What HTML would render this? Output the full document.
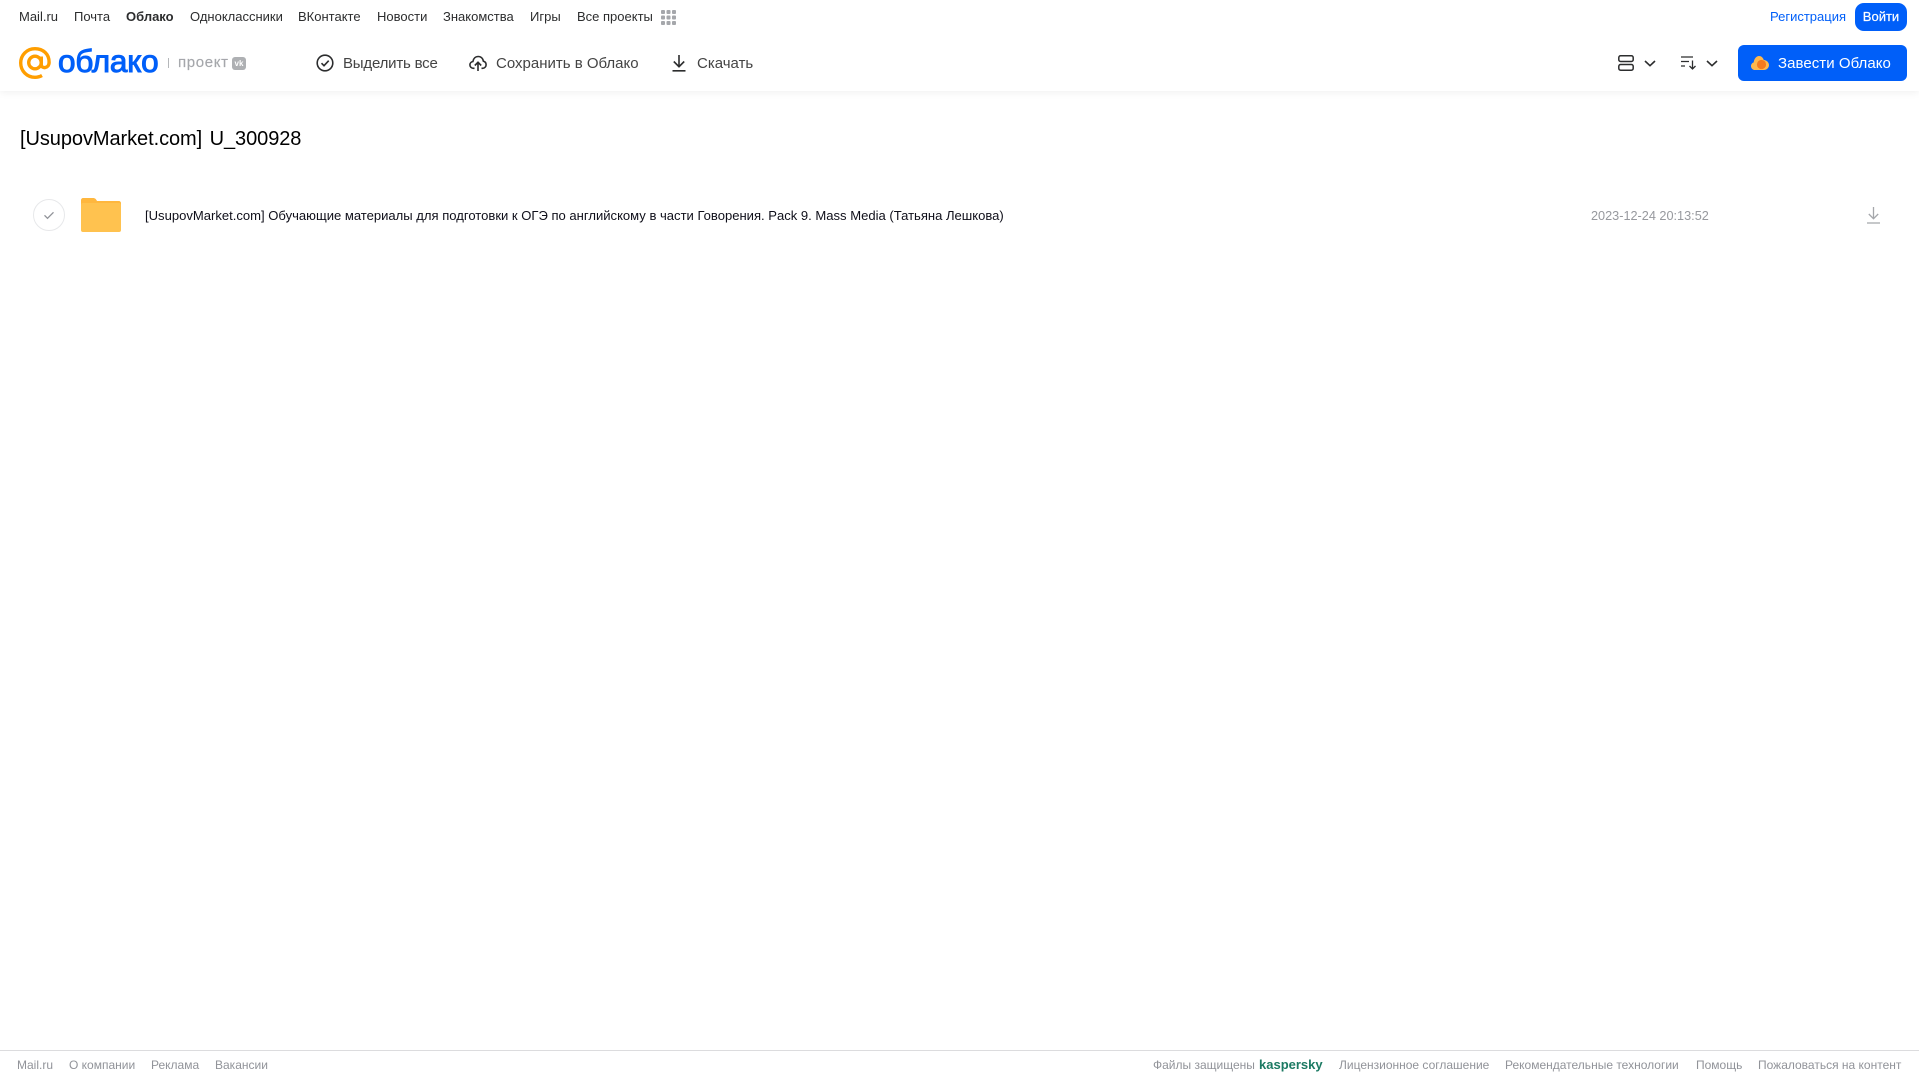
<!DOCTYPE html>
<html lang="ru"><head><meta charset="utf-8"><title>Облако</title>
<style>
html,body{margin:0;padding:0;width:1919px;height:1079px;overflow:hidden;background:#fff;font-family:"Liberation Sans","Noto Sans CJK SC",sans-serif}
.t{position:absolute;white-space:nowrap;line-height:16px}
.n{font-size:13px;top:9px;color:#2c2d2e}
.b{font-size:15px;top:55px;color:#444;line-height:17px}
.f{font-size:12px;top:1057px;color:#919399}
svg{position:absolute;overflow:visible}
#hd{position:absolute;left:0;top:0;width:1919px;height:91px;background:#fff;box-shadow:0 1px 8px rgba(0,0,0,.07)}
</style></head><body>
<div id="hd"></div>
<span class="t n" style="left:19px">Mail.ru</span>
<span class="t n" style="left:74px">Почта</span>
<span class="t n" style="left:126px;font-weight:700">Облако</span>
<span class="t n" style="left:190px">Одноклассники</span>
<span class="t n" style="left:298px">ВКонтакте</span>
<span class="t n" style="left:377px">Новости</span>
<span class="t n" style="left:443px">Знакомства</span>
<span class="t n" style="left:530px">Игры</span>
<span class="t n" style="left:577px">Все проекты</span>
<svg style="left:661px;top:10px" width="15" height="15" fill="#a5a7ab"><rect x="0" y="0" width="4" height="4" rx="1"/><rect x="5.500" y="0" width="4" height="4" rx="1"/><rect x="11" y="0" width="4" height="4" rx="1"/><rect x="0" y="5.500" width="4" height="4" rx="1"/><rect x="5.500" y="5.500" width="4" height="4" rx="1"/><rect x="11" y="5.500" width="4" height="4" rx="1"/><rect x="0" y="11" width="4" height="4" rx="1"/><rect x="5.500" y="11" width="4" height="4" rx="1"/><rect x="11" y="11" width="4" height="4" rx="1"/></svg>
<span class="t n" style="left:1770px;color:#005ff9">Регистрация</span>
<div class="t" style="left:1855px;top:3px;width:52px;height:28px;line-height:27px;background:#005ff9;border-radius:9px;color:#fff;font-size:13px;font-weight:400;text-align:center;-webkit-text-stroke:.2px #fff">Войти</div>

<svg style="left:19px;top:47px" width="32" height="32" viewBox="0 0 32 32" fill="none" stroke="#ff9e00" stroke-width="3.400"><circle cx="16" cy="15.500" r="6.300"/><path d="M22.300 9.500v8.200c0 4.200 7.500 4.200 7.800-2.200C30.300 7 24 1.700 16 1.700 8 1.700 1.700 8 1.700 16S8 30.300 16 30.300c2.800 0 4.900-.6 7-1.800"/></svg>
<span class="t" style="left:58px;top:44px;font-size:31.500px;line-height:34px;color:#005ff9;font-weight:400;-webkit-text-stroke:1px #005ff9;letter-spacing:-.2px">облако</span>
<div style="position:absolute;left:168px;top:58px;width:1px;height:10px;background:#b5b7ba"></div>
<span class="t" style="left:178px;top:55px;font-size:15px;color:#a5a7ab;-webkit-text-stroke:.15px #a5a7ab;letter-spacing:.65px">проект</span>
<div style="position:absolute;left:232px;top:57px;width:14px;height:13px;background:#aeb0b3;border-radius:3px;color:#fff;font-size:8px;line-height:13px;text-align:center;font-weight:700">vk</div>

<svg style="left:316px;top:54px" width="18" height="18" viewBox="0 0 18 18" fill="none" stroke="#2c2d2e" stroke-width="1.600"><circle cx="9" cy="9" r="7.800"/><path d="M5.500 9.200l2.500 2.500 4.700-5" /></svg>
<span class="t b" style="left:343px;letter-spacing:-.2px">Выделить все</span>
<svg style="left:469px;top:54px" width="18" height="18" viewBox="0 0 18 18" fill="none" stroke="#2c2d2e" stroke-width="1.600"><path d="M5.500 14.300H4.500C2.400 14.300.9 12.800.9 10.900c0-1.800 1.300-3.100 3-3.400C4.400 4.500 6.500 2.500 9.300 2.500c2.700 0 4.700 2 5.100 4.700 1.600.4 2.700 1.800 2.700 3.500 0 2-1.500 3.600-3.600 3.600h-1"/><path d="M9 17V8.500M5.800 11.500L9 8.300l3.200 3.200"/></svg>
<span class="t b" style="left:496px">Сохранить в Облако</span>
<svg style="left:671px;top:54px" width="16" height="18" viewBox="0 0 16 18" fill="none" stroke="#2c2d2e" stroke-width="1.600"><path d="M8 1v11.500M2.800 7.500L8 12.700l5.200-5.200M1.500 16.800h13"/></svg>
<span class="t b" style="left:697px">Скачать</span>

<svg style="left:1618px;top:55px" width="16" height="16" viewBox="0 0 16 16" fill="none" stroke="#2c2d2e" stroke-width="1.500"><rect x=".8" y=".8" width="14.400" height="5.700" rx="1.800"/><rect x=".8" y="9.500" width="14.400" height="5.700" rx="1.800"/></svg>
<svg style="left:1644px;top:60px" width="12" height="7" viewBox="0 0 12 7" fill="none" stroke="#2c2d2e" stroke-width="1.600"><path d="M1 1l5 4.700L11 1"/></svg>
<svg style="left:1681px;top:56px" width="16" height="14" viewBox="0 0 16 14" fill="none" stroke="#2c2d2e" stroke-width="1.300"><path d="M0 1h12M0 5.500h8M0 10h4M11.500 4.500v8.500M8.500 10l3 3 3-3"/></svg>
<svg style="left:1706px;top:60px" width="12" height="7" viewBox="0 0 12 7" fill="none" stroke="#2c2d2e" stroke-width="1.600"><path d="M1 1l5 4.700L11 1"/></svg>
<div style="position:absolute;left:1738px;top:45px;width:169px;height:36px;background:#005ff9;border-radius:6px"></div>
<svg style="left:1751px;top:55px" width="18" height="16" viewBox="0 0 18 16"><path fill="#ffb84d" d="M4 15C1.800 15 0 13.300 0 11.100 0 9.300 1.200 7.900 2.700 7.400 3 4 5.300 1 8 1c2.400 0 4 1.700 4.800 4 2.900.2 5.200 2.500 5.200 5 0 2.800-2.200 5-5 5z"/><circle cx="10.500" cy="9.500" r="4.600" fill="#f47a20"/></svg>
<span class="t" style="left:1778px;top:55px;font-size:15px;line-height:17px;color:#fff;letter-spacing:.05px">Завести Облако</span>

<span class="t" style="left:20px;top:127px;font-size:20px;line-height:25px;color:#000;word-spacing:2px;letter-spacing:-.07px">[UsupovMarket.com] U_300928</span>

<svg style="left:33px;top:199px" width="32" height="32" viewBox="0 0 32 32" fill="none"><circle cx="16" cy="16" r="15.500" stroke="#e7e8ea"/><path d="M11.500 16.300l3 3 6-6" stroke="#919399" stroke-width="1.300"/></svg>
<svg style="left:81px;top:198px" width="40" height="34" viewBox="0 0 40 34"><path fill="#ffb73e" d="M2 0h10c2 0 3 1 4 3h22c1 0 2 1 2 2v3H0V2C0 1 1 0 2 0z"/><rect y="5" width="40" height="29" rx="2" fill="#ffc24f"/></svg>
<span class="t" style="left:145px;top:207px;font-size:13.060px;line-height:17px;color:#0f0f1a">[UsupovMarket.com] Обучающие материалы для подготовки к ОГЭ по английскому в части Говорения. Pack 9. Mass Media (Татьяна Лешкова)</span>
<span class="t" style="left:1591px;top:207.500px;font-size:12.700px;line-height:17px;color:#97999e">2023-12-24 20:13:52</span>
<svg style="left:1867px;top:207px" width="13" height="17" viewBox="0 0 13 17" fill="none" stroke="#a5a7ab" stroke-width="1.300"><path d="M6.500 0v11.500M1.800 7l4.700 4.700L11.200 7M0 16h13"/></svg>

<div style="position:absolute;left:0;top:1050px;width:1919px;height:1px;background:#dcdcde"></div>
<span class="t f" style="left:17px">Mail.ru</span>
<span class="t f" style="left:69px">О компании</span>
<span class="t f" style="left:151px">Реклама</span>
<span class="t f" style="left:215px">Вакансии</span>
<span class="t f" style="left:1153px">Файлы защищены</span>
<span class="t f" style="left:1259px;font-size:13px;font-weight:700;color:#1c7a63">kaspersky</span>
<span class="t f" style="left:1339px">Лицензионное соглашение</span>
<span class="t f" style="left:1505px">Рекомендательные технологии</span>
<span class="t f" style="left:1696px">Помощь</span>
<span class="t f" style="left:1758px">Пожаловаться на контент</span>
</body></html>
